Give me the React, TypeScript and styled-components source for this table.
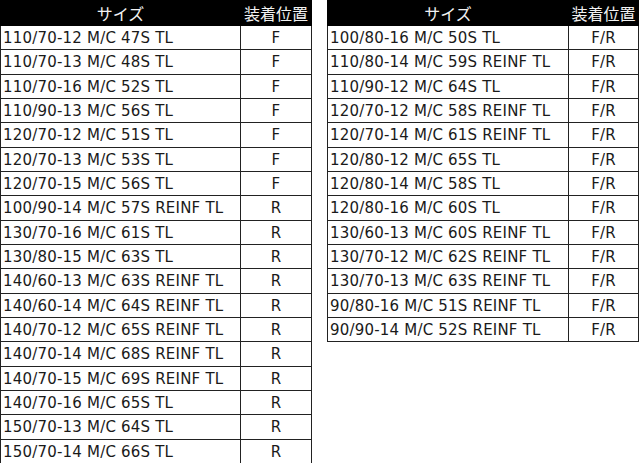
import React from "react"
import styled, { createGlobalStyle } from "styled-components"

interface TireRow {
    size: string
    position: string
}

const leftRows: TireRow[] = [
    { size: "110/70-12 M/C 47S TL", position: "F" },
    { size: "110/70-13 M/C 48S TL", position: "F" },
    { size: "110/70-16 M/C 52S TL", position: "F" },
    { size: "110/90-13 M/C 56S TL", position: "F" },
    { size: "120/70-12 M/C 51S TL", position: "F" },
    { size: "120/70-13 M/C 53S TL", position: "F" },
    { size: "120/70-15 M/C 56S TL", position: "F" },
    { size: "100/90-14 M/C 57S REINF TL", position: "R" },
    { size: "130/70-16 M/C 61S TL", position: "R" },
    { size: "130/80-15 M/C 63S TL", position: "R" },
    { size: "140/60-13 M/C 63S REINF TL", position: "R" },
    { size: "140/60-14 M/C 64S REINF TL", position: "R" },
    { size: "140/70-12 M/C 65S REINF TL", position: "R" },
    { size: "140/70-14 M/C 68S REINF TL", position: "R" },
    { size: "140/70-15 M/C 69S REINF TL", position: "R" },
    { size: "140/70-16 M/C 65S TL", position: "R" },
    { size: "150/70-13 M/C 64S TL", position: "R" },
    { size: "150/70-14 M/C 66S TL", position: "R" },
]

const rightRows: TireRow[] = [
    { size: "100/80-16 M/C 50S TL", position: "F/R" },
    { size: "110/80-14 M/C 59S REINF TL", position: "F/R" },
    { size: "110/90-12 M/C 64S TL", position: "F/R" },
    { size: "120/70-12 M/C 58S REINF TL", position: "F/R" },
    { size: "120/70-14 M/C 61S REINF TL", position: "F/R" },
    { size: "120/80-12 M/C 65S TL", position: "F/R" },
    { size: "120/80-14 M/C 58S TL", position: "F/R" },
    { size: "120/80-16 M/C 60S TL", position: "F/R" },
    { size: "130/60-13 M/C 60S REINF TL", position: "F/R" },
    { size: "130/70-12 M/C 62S REINF TL", position: "F/R" },
    { size: "130/70-13 M/C 63S REINF TL", position: "F/R" },
    { size: "90/80-16 M/C 51S REINF TL", position: "F/R" },
    { size: "90/90-14 M/C 52S REINF TL", position: "F/R" },
]

const GlobalStyle = createGlobalStyle`
    body {
        margin: 0;
        background: #fff;
        font-family: "DejaVu Sans", "Noto Sans CJK JP", sans-serif;
    }
`

interface SizeTableProps {
    rows: TireRow[]
    sizeWidth: number
}
const SizeTable = ({ rows, sizeWidth }: SizeTableProps) => {
    return (
        <Table>
            <colgroup>
                <col style={{ width: sizeWidth }} />
                <col />
            </colgroup>
            <thead>
                <tr>
                    <HeaderCell>サイズ</HeaderCell>
                    <HeaderCell $divider>装着位置</HeaderCell>
                </tr>
            </thead>
            <tbody>
                {rows.map((row, index) => (
                    <tr key={index}>
                        <SizeCell>{row.size}</SizeCell>
                        <PositionCell>{row.position}</PositionCell>
                    </tr>
                ))}
            </tbody>
        </Table>
    )
}

const App = () => {
    return (
        <>
            <GlobalStyle />
            <Page>
                <SizeTable rows={leftRows} sizeWidth={240} />
                <SizeTable rows={rightRows} sizeWidth={241} />
            </Page>
        </>
    )
}

const Page = styled.div`
    display: flex;
    align-items: flex-start;
    gap: 15px;
    width: 640px;
    height: 463px;
    overflow: hidden;
`

const Table = styled.table`
    width: 312px;
    border-collapse: collapse;
    table-layout: fixed;
    font-size: 15px;
    letter-spacing: 0.2px;
    color: #1a1a1a;
`

const HeaderCell = styled.th<{ $divider?: boolean }>`
    height: 24px;
    padding: 0;
    background: #000;
    color: #f2f2f2;
    font-family: "Noto Sans CJK JP", sans-serif;
    font-weight: normal;
    font-size: 16px;
    letter-spacing: 0;
    line-height: 24px;
    text-align: center;
    border: 1px solid #000;
    border-left: ${(props) => (props.$divider ? "1px solid #bbb" : "1px solid #000")};
`

const SizeCell = styled.td`
    height: 22.33px;
    padding: 1px 0 0 2px;
    border: 1px solid #222;
    white-space: nowrap;
    line-height: 22px;
`

const PositionCell = styled.td`
    height: 22.33px;
    padding: 1px 0 0 0;
    border: 1px solid #222;
    text-align: center;
    line-height: 22px;
`

export default App
